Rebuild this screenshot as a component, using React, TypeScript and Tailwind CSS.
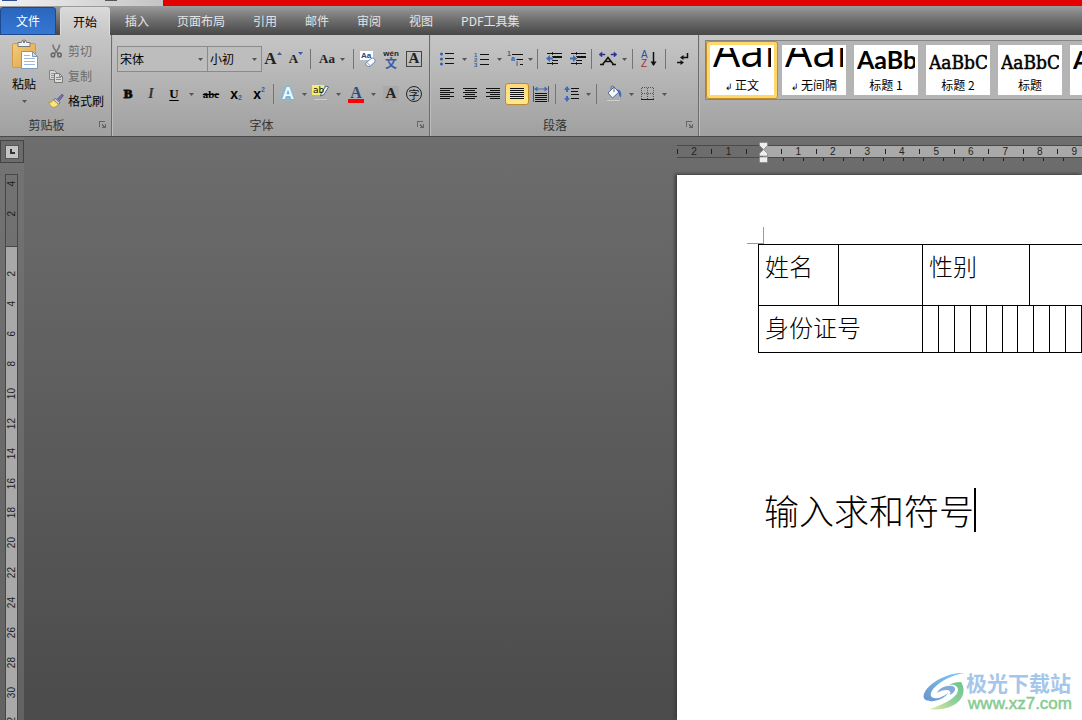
import React from "react";

const cjk = "font-['Noto_Sans_CJK_SC',sans-serif]";

function Arrow({ className = "w-3" }: { className?: string }) {
  return (
    <span className={`flex shrink-0 justify-center ${className}`}>
      <svg width="5" height="3" viewBox="0 0 5 3" aria-hidden="true">
        <path d="M0 0h5L2.5 3z" fill="#555" />
      </svg>
    </span>
  );
}

function Tool({
  label,
  children,
  width = "w-[22px]",
  arrow,
  className = "",
}: {
  label: string;
  children: React.ReactNode;
  width?: string;
  arrow?: string;
  className?: string;
}) {
  return (
    <button type="button" aria-label={label} className={`flex h-[22px] shrink-0 items-center ${className}`}>
      <span className={`flex items-center justify-center ${width}`}>{children}</span>
      {arrow && <Arrow className={arrow} />}
    </button>
  );
}

function Sep({ className = "" }: { className?: string }) {
  return (
    <span className={`flex w-[5px] shrink-0 justify-center ${className}`}>
      <span className="h-5 w-px bg-[#747474]" />
    </span>
  );
}

function Lines({ rows }: { rows: [number, number][] }) {
  return (
    <svg width="16" height="14" viewBox="0 0 16 14" aria-hidden="true" shapeRendering="crispEdges">
      {rows.map(([x, w], i) => (
        <rect key={i} x={x} y={1 + i * 2} width={w} height="1" fill="#111" />
      ))}
    </svg>
  );
}

function Group({
  title,
  className = "",
  children,
}: {
  title: string;
  className?: string;
  children: React.ReactNode;
}) {
  return (
    <section
      aria-label={title}
      className={`flex shrink-0 flex-col border-r border-[#6c6c6c] shadow-[1px_0_0_#bdbdbd] ${className}`}
    >
      <div className="flex-1">{children}</div>
      <div className="flex h-[22px] items-center text-[#333]">
        <span className="flex-1 text-center">{title}</span>
        <button type="button" aria-label={`${title}设置`} className="flex w-[18px] justify-start pl-1.5">
          <svg width="8" height="8" viewBox="0 0 8 8" aria-hidden="true" shapeRendering="crispEdges">
            <path d="M0 6V0h6v1H1v5z" fill="#666" />
            <path d="M3 3h1v1h1v1h1V3h1v4H3V6h1V5H3z" fill="#666" />
          </svg>
        </button>
      </div>
    </section>
  );
}

function Picker({ label, value, className }: { label: string; value: string; className: string }) {
  return (
    <label className={`relative flex h-[26px] items-center border border-[#8a8a8a] bg-[#bdbdbd] ${className}`}>
      <select
        aria-label={label}
        className="h-full w-full appearance-none bg-transparent pl-0.5 text-xs text-black outline-none"
        defaultValue={value}
      >
        <option>{value}</option>
      </select>
      <span className="pointer-events-none absolute right-1">
        <Arrow className="w-[5px]" />
      </span>
    </label>
  );
}

const serif = "font-['Liberation_Serif',serif] font-bold text-[#222]";

function ClipboardGroup() {
  return (
    <Group title="剪贴板" className="w-28">
      <div className="flex">
        <button type="button" className="flex w-12 flex-col items-center pt-1 text-black">
          <svg width="28" height="32" viewBox="0 0 28 32" aria-hidden="true">
            <defs>
              <linearGradient id="board" x1="0" y1="0" x2="1" y2="1">
                <stop offset="0" stopColor="#f3cd7c" />
                <stop offset="1" stopColor="#dca24a" />
              </linearGradient>
            </defs>
            <rect x="2.5" y="4.5" width="23" height="24" rx="1.5" fill="url(#board)" stroke="#d39b45" />
            <path d="M8 3.500h3.500a2.500 2.500 0 0 1 5 0H20v4H8z" fill="#f4f4f4" stroke="#777" />
            <circle cx="14" cy="3" r="1" fill="#555" />
            <path d="M11.500 12.500h11l5 5v12h-16z" fill="#fff" stroke="#7e98bd" />
            <path d="M22.500 12.500v5h5z" fill="#cfdcef" stroke="#7e98bd" />
            <path d="M14 16.500h6M14 19.500h11M14 22.500h11M14 25.500h11" stroke="#9db8dc" />
          </svg>
          <span className="mt-[3px] leading-5">粘贴</span>
          <span className="mt-1.5">
            <Arrow />
          </span>
        </button>
        <div className="flex flex-col gap-0.5 pt-1 text-[#6c6c6c]">
          <button type="button" className="flex h-[23px] items-center gap-1">
            <svg width="16" height="16" viewBox="0 0 16 16" aria-hidden="true" fill="none">
              <path d="M5 1.500c0 3 2 6 5 9M11.500 1.500c0 3-2 6-5 9" stroke="#777" strokeWidth="1.600" />
              <ellipse cx="5" cy="12" rx="1.700" ry="2" stroke="#666" strokeWidth="1.600" />
              <ellipse cx="11.500" cy="12" rx="1.700" ry="2" stroke="#666" strokeWidth="1.600" />
            </svg>
            剪切
          </button>
          <button type="button" className="flex h-[23px] items-center gap-1">
            <svg width="16" height="16" viewBox="0 0 16 16" aria-hidden="true">
              <path d="M1.500 2.500h5l3 3v6h-8z" fill="#d5d5d5" stroke="#858585" />
              <path d="M3 5.500h3M3 7.500h3M3 9.500h3" stroke="#999" />
              <path d="M6.500 5.500h5l3 3v6h-8z" fill="#ddd" stroke="#777" />
              <path d="M11.500 5.500v3h3M8 9.500h5M8 11.500h5" stroke="#888" fill="none" />
            </svg>
            复制
          </button>
          <button type="button" className="flex h-[23px] items-center gap-1 text-black">
            <svg width="16" height="16" viewBox="0 0 16 16" aria-hidden="true">
              <path d="M14 1l1.500 1.500-4 5L9.500 6z" fill="#7a6ab4" stroke="#4b4680" strokeWidth=".6" />
              <path d="M7.500 5.500l4.500 4-1.500 2-5-4.500z" fill="#c3cde0" stroke="#4c5668" strokeWidth=".8" />
              <path d="M5.500 7l5 4.500c-1.500 2-4 3-6 3C3 13 1.500 11.500.5 9.500c2 .3 3.800-.9 5-2.500z" fill="#f6dc74" stroke="#b08b2c" strokeWidth=".7" />
              <path d="M6.500 9l-2.500 3M8.500 10.500L6.500 13" stroke="#fff5b8" />
            </svg>
            格式刷
          </button>
        </div>
      </div>
    </Group>
  );
}

function FontGroup() {
  return (
    <Group title="字体" className="w-[318px]">
      <div className="flex flex-col gap-[9px] pl-[5px] pt-[11px]">
        <div className="flex h-[26px] items-center gap-px">
          <div className="-mr-px flex">
            <Picker label="字体" value="宋体" className="w-[91px]" />
            <Picker label="字号" value="小初" className="w-[54px] border-l-0" />
          </div>
          <Tool label="增大字体">
            <span className={`${serif} text-[17px] leading-5`}>A</span>
            <svg className="mb-3" width="5" height="3" viewBox="0 0 5 3"><path d="M0 3h5L2.500 0z" fill="#3d5b9c" /></svg>
          </Tool>
          <Tool label="缩小字体">
            <span className={`${serif} text-[13px] leading-5`}>A</span>
            <svg className="mb-3" width="5" height="3" viewBox="0 0 5 3"><path d="M0 0h5L2.500 3z" fill="#3d5b9c" /></svg>
          </Tool>
          <Sep />
          <Tool label="更改大小写" width="w-5" arrow="w-2.5" className="px-[3px]">
            <span className={`${serif} text-[13px]`}>Aa</span>
          </Tool>
          <Sep />
          <Tool label="清除格式">
            <svg width="18" height="18" viewBox="0 0 18 18" aria-hidden="true">
              <rect x="1" y="1" width="13" height="9" fill="#fff" />
              <text x="2" y="8" fontSize="8" fontWeight="bold" fontFamily="Liberation Sans, sans-serif" fill="#26468d">Aa</text>
              <path d="M7 13l5-4.500q1.500-1 2.800 0l1 1.200q1 1.300 0 2.400l-4.500 4q-1.500 1-2.800 0L7 15q-1-1.200 0-2z" fill="#f7f9fd" stroke="#7385ac" />
              <path d="M8 12.500l3.500 3.500" stroke="#8a9cc4" />
            </svg>
          </Tool>
          <Tool label="拼音指南">
            <span className="flex flex-col items-center">
              <span className="font-['Liberation_Sans',sans-serif] text-[8px] font-bold leading-[7px] text-[#222]">wén</span>
              <span className="text-xs leading-[11px] font-bold text-[#3b5ca8]">文</span>
            </span>
          </Tool>
          <Tool label="字符边框">
            <span className={`flex h-4 w-4 items-center justify-center border border-[#444] text-[15px] ${serif}`}>A</span>
          </Tool>
        </div>
        <div className="flex h-[26px] items-center gap-px">
          <Tool label="加粗"><span className="font-['Liberation_Serif',serif] text-[13px] font-bold [-webkit-text-stroke:1px_#111]">B</span></Tool>
          <Tool label="倾斜"><span className="font-['Liberation_Serif',serif] text-sm font-bold italic text-[#333]">I</span></Tool>
          <Tool label="下划线" arrow="w-3"><span className="font-['Liberation_Serif',serif] text-[13px] font-bold underline underline-offset-2">U</span></Tool>
          <Tool label="删除线" width="w-[26px]"><span className="font-['Liberation_Serif',serif] text-[11px] font-bold line-through">abc</span></Tool>
          <Tool label="下标">
            <span className="font-['Liberation_Sans',sans-serif] text-sm font-bold leading-4">x</span>
            <span className="mt-2 font-['Liberation_Sans',sans-serif] text-[7px] font-bold text-[#3b5ca8]">2</span>
          </Tool>
          <Tool label="上标">
            <span className="font-['Liberation_Sans',sans-serif] text-sm font-bold leading-4">x</span>
            <span className="mb-2 font-['Liberation_Sans',sans-serif] text-[7px] font-bold text-[#3b5ca8]">2</span>
          </Tool>
          <Sep />
          <Tool label="文本效果" arrow="w-2.5">
            <span className="font-['Liberation_Sans',sans-serif] text-[17px] font-bold text-[#f2faff] [text-shadow:0_0_1px_#3f95cf,0_0_2px_#58aee0,0_0_4px_#7cc8f5]">A</span>
          </Tool>
          <Tool label="突出显示" arrow="w-3">
            <svg width="18" height="18" viewBox="0 0 18 18" aria-hidden="true">
              <rect x="0" y="0" width="12" height="10" fill="#f4ee72" />
              <path d="M16.500 2L12 9.500 8.500 11l1-3.500L14 1z" fill="#eef2f8" stroke="#556482" />
              <text x="1" y="8" fontSize="9" fontFamily="DejaVu Sans, sans-serif" fill="#111">ab</text>
              <rect x="1.500" y="13.500" width="14" height="2" fill="#d0d0d0" stroke="#aaa" />
            </svg>
          </Tool>
          <Tool label="字体颜色" arrow="w-3">
            <span className="flex w-4 flex-col items-center">
              <span className="font-['Liberation_Serif',serif] text-base leading-[13px] font-bold text-[#2f4a7c]">A</span>
              <span className="h-1 w-full bg-[#fb0007]" />
            </span>
          </Tool>
          <Tool label="字符底纹">
            <span className={`flex h-4 w-4 items-center justify-center bg-[#a9a9a9] text-[15px] ${serif}`}>A</span>
          </Tool>
          <Tool label="带圈字符">
            <span className="flex h-4 w-4 items-center justify-center rounded-full border border-[#222] text-[11px] leading-none text-[#111]">字</span>
          </Tool>
        </div>
      </div>
    </Group>
  );
}

const full: [number, number] = [1, 14];
const short: [number, number] = [1, 10];

function ParagraphGroup() {
  return (
    <Group title="段落" className="w-[269px]">
      <div className="flex flex-col gap-[9px] pl-1.5 pt-[11px]">
        <div className="flex h-[26px] items-center gap-px">
          <Tool label="项目符号" arrow="w-3">
            <svg width="14" height="14" viewBox="0 0 14 14" aria-hidden="true">
              {[2, 7, 12].map((y) => (
                <g key={y}>
                  <circle cx="1.500" cy={y} r="1.500" fill="#3b5ca8" />
                  <path d={`M5 ${y - 0.5}h9`} stroke="#111" />
                </g>
              ))}
            </svg>
          </Tool>
          <Tool label="编号" arrow="w-3">
            <svg width="16" height="16" viewBox="0 0 16 16" aria-hidden="true">
              {[1, 2, 3].map((n) => (
                <g key={n}>
                  <text x="0" y={n * 5 + 1} fontSize="6" fontWeight="bold" fontFamily="Liberation Sans, sans-serif" fill="#3b5ca8">{n}</text>
                  <path d={`M6 ${n * 5 - 1.5}h9`} stroke="#111" />
                </g>
              ))}
            </svg>
          </Tool>
          <Tool label="多级列表" width="w-5" arrow="w-2">
            <svg width="18" height="16" viewBox="0 0 18 16" aria-hidden="true">
              <g fontSize="7" fontWeight="bold" fontFamily="Liberation Sans, sans-serif" fill="#3b5ca8">
                <text x="0" y="5">1</text>
                <text x="4" y="10">a</text>
                <text x="9" y="15">i</text>
              </g>
              <path d="M5 3.500h11M9.500 8.500H16M13 13.500h3" stroke="#111" />
            </svg>
          </Tool>
          <Sep />
          <Tool label="减少缩进" width="w-[26px]">
            <svg width="16" height="16" viewBox="0 0 16 16" aria-hidden="true">
              <path d="M1 2.500h15M7 5.500h9M7 6.500h9M7 9.500h5M1 12.500h11" stroke="#111" />
              <path d="M6.500 1v14" stroke="#333" strokeDasharray="1 1" />
              <path d="M0 7.500L4 4v2.500h3v2H4V11z" fill="#3f6cb8" />
            </svg>
          </Tool>
          <Tool label="增加缩进" width="w-5">
            <svg width="16" height="16" viewBox="0 0 16 16" aria-hidden="true">
              <path d="M1 2.500h15M7 5.500h9M7 6.500h9M7 9.500h5M1 12.500h11" stroke="#111" />
              <path d="M6.500 1v14" stroke="#333" strokeDasharray="1 1" />
              <path d="M7 7.500L3 4v2.500H0v2h3V11z" fill="#3f6cb8" />
            </svg>
          </Tool>
          <Sep />
          <Tool label="中文版式" width="w-[26px]" arrow="w-1.5">
            <svg width="18" height="14" viewBox="0 0 18 14" aria-hidden="true">
              <path d="M1 12.500h4M13 12.500h4M3.500 12.500l5.500-7 5.500 7M6 9.500h6" fill="none" stroke="#111" strokeWidth="1.500" />
              <path d="M0 2.500L3 0v2h3v1H3v2zM18 2.500L15 0v2h-3v1h3v2z" fill="#2b2f94" stroke="#2b2f94" strokeWidth=".5" />
            </svg>
          </Tool>
          <Sep className="ml-0.5" />
          <Tool label="排序" width="w-[26px]">
            <svg width="16" height="18" viewBox="0 0 16 18" aria-hidden="true">
              <text x="0" y="8" fontSize="10" fontFamily="Liberation Sans, sans-serif" fill="#2d4f9e">A</text>
              <text x="0" y="17" fontSize="10" fontFamily="Liberation Sans, sans-serif" fill="#a02c3a">Z</text>
              <path d="M12.500 2v13" stroke="#111" strokeWidth="1.500" />
              <path d="M9.500 11.500h6l-3 4.500z" fill="#111" />
            </svg>
          </Tool>
          <Sep />
          <Tool label="显示编辑标记" width="w-7">
            <svg width="12" height="14" viewBox="0 0 12 14" aria-hidden="true">
              <path d="M10.500 1v4.500H5M0 10.500h5" fill="none" stroke="#111" strokeWidth="1.500" />
              <path d="M3 5.500L6.500 3v5zM7 10.500L3.500 8v5z" fill="#111" />
            </svg>
          </Tool>
        </div>
        <div className="flex h-[26px] items-center gap-px">
          <Tool label="左对齐"><Lines rows={[full, short, full, short, full, short]} /></Tool>
          <Tool label="居中"><Lines rows={[full, [3, 10], full, [3, 10], full, [3, 10]]} /></Tool>
          <Tool label="右对齐"><Lines rows={[full, [5, 10], full, [5, 10], full, [5, 10]]} /></Tool>
          <Tool label="两端对齐" className="rounded-[3px] border border-[#c18a2d] bg-linear-to-b from-[#ffd978] to-[#ffe98c]">
            <Lines rows={[full, full, full, full, full, full]} />
          </Tool>
          <Tool label="分散对齐">
            <svg width="16" height="16" viewBox="0 0 16 16" aria-hidden="true">
              <path d="M.5 0v16M15.500 0v16" stroke="#555" />
              <path d="M2 7.500h12M2 9.500h12M2 11.500h12M2 13.500h12M2 15.500h12" stroke="#111" />
              <path d="M1 3l3.500-2.500v2h7v-2L15 3l-3.500 2.500v-2h-7v2z" fill="#3f6cb8" />
            </svg>
          </Tool>
          <Sep />
          <Tool label="行距" width="w-[26px]" arrow="w-1.5">
            <svg width="16" height="16" viewBox="0 0 16 16" aria-hidden="true">
              <path d="M3 0l3 4H4v2H2V4H0zM3 16l3-4H4v-2H2v2H0z" fill="#3f6cb8" />
              <path d="M7 2.500h8M7 5.500h7M7 8.500h8M7 12.500h8" stroke="#111" />
            </svg>
          </Tool>
          <Sep className="ml-0.5" />
          <Tool label="底纹" width="w-7" arrow="w-1.5">
            <svg width="18" height="18" viewBox="0 0 18 18" aria-hidden="true">
              <path d="M3 8l6-6 5 5-6.500 6z" fill="#f5f8fd" stroke="#566c95" />
              <path d="M6 5V2.500a1.500 1.500 0 0 1 3 0V7" fill="none" stroke="#566c95" />
              <path d="M11 4.500c4.500-.5 6 3 5 8-2-1-2-3-2.500-5z" fill="#3f6cb8" />
              <rect x="1.500" y="14.500" width="14" height="2" fill="#d0d0d0" stroke="#aaa" />
            </svg>
          </Tool>
          <Tool label="边框" width="w-[26px]" arrow="w-1.5">
            <svg width="14" height="14" viewBox="0 0 14 14" aria-hidden="true" shapeRendering="crispEdges">
              <path d="M.5.5h12M.5 6.500h12M.5.5v12M6.500.5v12M12.500.5v12" stroke="#555" strokeDasharray="1 1" />
              <path d="M0 12.500h13" stroke="#222" />
            </svg>
          </Tool>
        </div>
      </div>
    </Group>
  );
}

const body = "font-['Open_Sans',sans-serif] text-[43px] leading-[48px]";
const heading = "font-['Lato',sans-serif] text-[25px] leading-8 font-bold";
const title =
  "font-['DejaVu_Serif_Condensed','DejaVu_Serif',serif] text-[19px] leading-[26px] [-webkit-text-stroke:0.5px_#000]";

const styles = [
  { name: "正文", mark: true, preview: body, selected: true },
  { name: "无间隔", mark: true, preview: body },
  { name: "标题 1", preview: heading },
  { name: "标题 2", preview: title },
  { name: "标题", preview: title },
  { name: "副标题", preview: heading },
];

function StyleGallery() {
  return (
    <section aria-label="样式" className="min-w-0 flex-1 overflow-hidden pl-1.5 pt-[5px]">
      <div className="flex h-[60px] w-max border border-[#848484] bg-[#b4b4b4]">
        {styles.map((s) => (
          <button
            key={s.name}
            type="button"
            className={`h-[58px] w-[72px] shrink-0 border p-[3px] ${
              s.selected ? "rounded-[3px] border-[#bd8b30] bg-[#ffd86b]" : "border-transparent"
            }`}
          >
            <span className="flex h-[50px] w-16 flex-col bg-white px-[3px] pt-[3px] text-black">
              <span className="flex h-[27px] shrink-0 items-end overflow-hidden">
                <span className={`whitespace-nowrap ${s.preview}`}>AaBbC</span>
              </span>
              <span className="text-center leading-5 whitespace-nowrap">
                {s.mark && <span className="text-[9px]">↲ </span>}
                {s.name}
              </span>
            </span>
          </button>
        ))}
      </div>
    </section>
  );
}

const tabs = ["插入", "页面布局", "引用", "邮件", "审阅", "视图", "PDF工具集"];

function HorizontalRuler() {
  return (
    <div className="relative mt-2 h-4 overflow-hidden font-['Liberation_Sans',sans-serif] text-[10px] leading-[11px] text-[#222]">
      <div className="flex h-[13px] border-y border-[#4a4a4a]">
        <div className="grid w-[86px] shrink-0 grid-cols-[34px_35px_17px] items-center text-center">
          {["2", "1", ""].map((n, i) => (
            <span key={i} className="relative">
              <i className="absolute left-0 top-[3px] h-[5px] w-px bg-[#222]" />
              {n || "\u00a0"}
            </span>
          ))}
        </div>
        <div className="w-full shrink-0 bg-[#a9a9a9] pl-[18px]">
          <div className="grid w-[345px] grid-cols-10">
            {[1, 2, 3, 4, 5, 6, 7, 8, 9, 10].map((n) => (
              <span key={n} className="relative text-center">
                <i className="absolute left-0 top-[3px] h-[5px] w-px bg-[#222]" />
                {n}
              </span>
            ))}
          </div>
        </div>
      </div>
      <div className="flex gap-[19px] pl-[106px]">
        {Array.from({ length: 15 }, (_, i) => (
          <i key={i} className="h-[3px] w-px shrink-0 bg-[#222]" />
        ))}
      </div>
    </div>
  );
}

function VerticalRuler() {
  const turned = "rotate-180 [writing-mode:vertical-rl]";
  return (
    <aside className="flex w-6 shrink-0 flex-col overflow-hidden bg-[#7a7a7a]/50 font-['Liberation_Sans',sans-serif] text-[10px] leading-[11px] text-[#1c1c1c]">
      <button type="button" aria-label="制表符" className="mt-[3px] flex h-[23px] w-6 shrink-0 items-center justify-center border border-[#444] bg-[#6b6b6b]">
        <span className="flex h-3.5 w-3.5 items-center justify-center border border-[#555] bg-[#c4c4c4]">
          <span className="h-[5px] w-[5px] border-b-2 border-l-2 border-[#333]" />
        </span>
      </button>
      <div className="ml-[5px] mt-[11px] flex min-h-0 w-[13px] flex-1 flex-col border border-b-0 border-[#474747]">
        <div className="flex h-[72px] shrink-0 flex-col border-b border-[#474747]">
          <div className="-mt-[6px] flex flex-col">
            {[4, 2].map((n) => (
              <div key={n} className="flex h-[30px] items-center justify-center">
                <span className={turned}>{n}</span>
              </div>
            ))}
          </div>
        </div>
        <div className="min-h-0 flex-1 overflow-hidden bg-[#a9a9a9] pt-3">
          <div className="grid h-[478px] grid-rows-16">
            {Array.from({ length: 16 }, (_, i) => (
              <div key={i} className="flex items-center justify-center">
                <span className={turned}>{(i + 1) * 2}</span>
              </div>
            ))}
          </div>
        </div>
      </div>
    </aside>
  );
}

function Watermark() {
  return (
    <div className="absolute bottom-1.5 right-2.5 flex items-center gap-px">
      <svg width="42" height="40" viewBox="0 0 42 40" aria-hidden="true">
        <defs>
          <linearGradient id="swirlBlue" x1="0" y1="1" x2="1" y2="0">
            <stop offset="0" stopColor="#6a93cf" />
            <stop offset="1" stopColor="#7fcdf2" />
          </linearGradient>
          <linearGradient id="swirlGreen" x1="0" y1="1" x2="1" y2="0">
            <stop offset="0" stopColor="#dfe9a0" />
            <stop offset=".5" stopColor="#8fd09a" />
            <stop offset="1" stopColor="#6cc48c" />
          </linearGradient>
        </defs>
        <path d="M41 1C28 0 10 8 3 18c-6 9 0 12 8 11 6-1 12-4 14-8-5 4-10 6-14 5-5-1-4-6 1-11C19 8 30 3 41 1z" fill="url(#swirlBlue)" />
        <path d="M14 21c2-5 9-8 15-7 5 1 4 6-2 9 1-3 0-5-4-5-3 0-6 1-9 3z" fill="#86a9dc" />
        <path d="M38 10c-5 0-9 1-12 3 5-1 9 1 9 5 0 6-10 13-28 19 12 2 24-2 30-9 4-5 5-12 1-18z" fill="url(#swirlGreen)" />
      </svg>
      <a href="http://www.xz7.com" className="flex flex-col">
        <span className="text-[21px] leading-6 font-bold text-[#a3c6ea]">极光下载站</span>
        <span className="pl-0.5 font-['Liberation_Sans',sans-serif] text-[17px] leading-5 text-[#86cb93] [-webkit-text-stroke:0.5px_#86cb93]">www.xz7.com</span>
      </a>
    </div>
  );
}

const columns = [80, 84, 16, 16, 16, 16, 16, 15, 12, 4, 16, 16, 16, 16];

function DocumentPage() {
  const cell = "border border-black px-1.5 align-top font-light text-2xl";
  return (
    <main className="relative mt-3.5 flex-1 overflow-hidden bg-white pl-[81px] pt-[69px] text-black shadow-[-2px_-1px_3px_#3c3c3c]">
      <span className="absolute left-[70px] top-[52px] h-[17px] w-[17px] border-b border-r border-[#999]" />
      <table className="w-[339px] table-fixed border-collapse">
        <colgroup>
          {columns.map((w, i) => (
            <col key={i} style={{ width: w }} />
          ))}
        </colgroup>
        <tbody>
          <tr className="h-[61px]">
            <td className={`${cell} pt-[5px]`}>姓名</td>
            <td className={cell} />
            <td colSpan={7} className={`${cell} pt-[5px]`}>性别</td>
            <td colSpan={5} className={cell} />
          </tr>
          <tr className="h-[47px]">
            <td colSpan={2} className={`${cell} pt-[5px]`}>身份证号</td>
            {[1, 1, 1, 1, 1, 1, 2, 1, 1, 1, 1].map((span, i) => (
              <td key={i} colSpan={span} className="border border-black" />
            ))}
          </tr>
        </tbody>
      </table>
      <p className="mt-[135px] flex items-center pl-1.5 text-[35px] leading-[42px] font-light">
        输入求和符号
        <span className="h-11 w-0.5 bg-black" />
      </p>
      <Watermark />
    </main>
  );
}

export default function App() {
  return (
    <div className={`flex h-screen flex-col overflow-hidden bg-linear-to-b from-[#767676] to-[#4b4b4b] text-xs ${cjk}`}>
      <div className="flex h-1.5 shrink-0">
        <div className="flex w-[163px] shrink-0 items-start bg-linear-to-r from-[#f2f2f2] to-[#c4c4c4]">
          <span className="ml-0.5 h-px w-[15px] bg-[#314f8c]" />
          <span className="ml-[88px] h-px w-3 bg-[#555]" />
        </div>
        <div className="flex-1 bg-[#e20000]" />
      </div>
      <nav className="flex h-[29px] shrink-0 items-end bg-linear-to-b from-[#9c9c9c] via-[#6d6d6d] to-[#474747] text-[#e4e4e4]">
        <button type="button" className="mr-1 h-7 w-14 rounded-t-[3px] border border-[#1c4a91] bg-linear-to-b from-[#2a66bd] to-[#3577d4] text-white">
          文件
        </button>
        <button type="button" className="mr-px h-7 w-[50px] rounded-t-[3px] border border-b-0 border-[#dcdcdc] bg-linear-to-b from-[#d9d9d9] to-[#c6c6c6] text-black">
          开始
        </button>
        {tabs.map((t) => (
          <button key={t} type="button" className="h-7 shrink-0 px-3.5">
            {t}
          </button>
        ))}
      </nav>
      <header className="flex h-[102px] shrink-0 border-b border-[#4a4a4a] bg-linear-to-b from-[#c6c6c6] to-[#a0a0a0]">
        <ClipboardGroup />
        <FontGroup />
        <ParagraphGroup />
        <StyleGallery />
      </header>
      <div className="flex min-h-0 flex-1">
        <VerticalRuler />
        <div className="flex-1" />
        <div className="relative flex w-[405px] shrink-0 flex-col">
          <HorizontalRuler />
          <svg className="absolute left-[82px] top-[5px]" width="9" height="21" viewBox="0 0 9 21" aria-hidden="true">
            <path d="M.5.5h8v3l-4 4-4-4z" fill="#eee" stroke="#777" strokeWidth=".6" />
            <path d="M.5 14v-2.500l4-4 4 4V14z" fill="#eee" stroke="#777" strokeWidth=".6" />
            <rect x=".5" y="15" width="8" height="5.500" fill="#eee" stroke="#777" strokeWidth=".6" />
          </svg>
          <DocumentPage />
        </div>
      </div>
    </div>
  );
}
